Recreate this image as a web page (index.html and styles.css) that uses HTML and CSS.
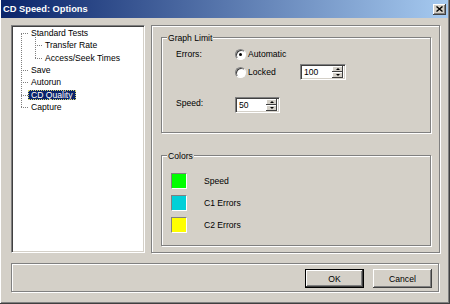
FILE: index.html
```html
<!DOCTYPE html>
<html lang="en">
<head>
    <meta charset="UTF-8">
    <title>CD Speed: Options</title>
    <link rel="stylesheet" href="styles.css">
</head>
<body>

    <div class="window">
        <div class="titlebar">
            <span class="title">CD Speed: Options</span>
            <span class="close-btn">
                <svg width="7" height="6" viewBox="0 0 7 6"><path d="M0.5 0.5 L6.5 5.5 M6.5 0.5 L0.5 5.5" stroke="#000" stroke-width="1.4"/></svg>
            </span>
        </div>

        <div class="main">
            <!-- Page tree -->
            <div class="tree">
                <ul class="tree-root">
                    <li>
                        <span class="node">Standard Tests</span>
                        <ul class="tree-sub">
                            <li><span class="node">Transfer Rate</span></li>
                            <li><span class="node">Access/Seek Times</span></li>
                        </ul>
                    </li>
                    <li><span class="node">Save</span></li>
                    <li><span class="node">Autorun</span></li>
                    <li><span class="node selected">CD Quality</span></li>
                    <li><span class="node">Capture</span></li>
                </ul>
            </div>

            <!-- CD Quality page -->
            <div class="panel">
                <div class="group graph-limit">
                    <span class="group-title">Graph Limit</span>
                    <div class="limit-grid">
                        <span class="field-label">Errors:</span>
                        <span class="radio-row"><span class="radio checked"></span>Automatic</span>
                        <span></span>

                        <span></span>
                        <span class="radio-row"><span class="radio"></span>Locked</span>
                        <span class="spin">
                            <span class="spin-value">100</span>
                            <span class="spin-btns">
                                <span class="spin-btn"><span class="arrow up"></span></span>
                                <span class="spin-btn"><span class="arrow down"></span></span>
                            </span>
                        </span>

                        <span class="field-label speed-label">Speed:</span>
                        <span class="spin spin-small">
                            <span class="spin-value">50</span>
                            <span class="spin-btns">
                                <span class="spin-btn"><span class="arrow up"></span></span>
                                <span class="spin-btn"><span class="arrow down"></span></span>
                            </span>
                        </span>
                    </div>
                </div>

                <div class="group colors">
                    <span class="group-title">Colors</span>
                    <div class="color-row"><span class="swatch speed"></span>Speed</div>
                    <div class="color-row"><span class="swatch c1"></span>C1 Errors</div>
                    <div class="color-row"><span class="swatch c2"></span>C2 Errors</div>
                </div>
            </div>
        </div>

        <div class="button-bar">
            <button class="btn default">OK</button>
            <button class="btn">Cancel</button>
        </div>
    </div>

</body>
</html>
```

FILE: styles.css
```css
body {
    margin: 0;
    font-family: "Liberation Sans", Arial, sans-serif;
    font-size: 8.6px;
    color: #000;
}
.window {
    width: 450px;
    height: 304px;
    box-sizing: border-box;
    background-color: #d4d0c8;
    border-right: 1px solid #404040;
    border-bottom: 1px solid #404040;
    padding: 0 1px 1px 1px;
    box-shadow: inset 1px 0 #fff, inset -1px -1px #808080;
}
.titlebar {
    height: 18px;
    display: flex;
    align-items: center;
    justify-content: space-between;
    padding: 0 2px;
    background: linear-gradient(to right, #0a246a, #a6caf0);
}
.title {
    color: white;
    font-weight: bold;
    font-size: 9.3px;
}
.close-btn {
    width: 13px;
    height: 11px;
    display: flex;
    align-items: center;
    justify-content: center;
    background-color: #d4d0c8;
    box-shadow: inset -1px -1px #404040, inset 1px 1px #fff, inset -2px -2px #808080;
}
.main {
    display: flex;
    gap: 6px;
    padding: 7px 8px 0 10px;
}
.tree {
    width: 134px;
    height: 228px;
    box-sizing: border-box;
    background-color: white;
    border: 1px solid;
    border-color: #808080 #fff #fff #808080;
    box-shadow: inset 1px 1px #404040, inset -1px -1px #d4d0c8;
    overflow: hidden;
}
.tree ul {
    list-style: none;
    margin: 0;
    padding: 0;
    position: relative;
}
.tree li {
    position: relative;
    line-height: 12.33px;
    white-space: nowrap;
}
.tree-root {
    margin-top: 1px !important;
}
.tree-root::before {
    content: "";
    position: absolute;
    left: 9px;
    top: 6px;
    bottom: 6px;
    border-left: 1px dotted #808080;
}
.tree-root > li {
    padding-left: 19px;
}
.tree-root > li::before {
    content: "";
    position: absolute;
    left: 9px;
    top: 6px;
    width: 7px;
    border-top: 1px dotted #808080;
}
.tree-sub::before {
    content: "";
    position: absolute;
    left: 4px;
    top: -5px;
    bottom: 6px;
    border-left: 1px dotted #808080;
}
.tree-sub > li {
    padding-left: 14px;
}
.tree-sub > li::before {
    content: "";
    position: absolute;
    left: 4px;
    top: 6px;
    width: 7px;
    border-top: 1px dotted #808080;
}
.node.selected {
    background-color: #0a246a;
    color: white;
    margin-left: -3px;
    padding: 0 3px;
    outline: 1px dotted #d8d870;
    outline-offset: -1px;
}
.panel {
    flex: 1;
    height: 228px;
    box-sizing: border-box;
    border: 1px solid #808080;
    box-shadow: inset 1px 1px #fff, 1px 1px #fff;
    padding: 11px 8px 0 9px;
}
.group {
    position: relative;
    box-sizing: border-box;
    border: 1px solid #808080;
    box-shadow: inset 1px 1px #fff, 1px 1px #fff;
}
.group-title {
    position: absolute;
    top: -5px;
    left: 5px;
    padding: 0 1px;
    line-height: 10px;
    background-color: #d4d0c8;
}
.graph-limit {
    height: 96px;
    padding: 7px 0 0 14px;
}
.limit-grid {
    display: grid;
    grid-template-columns: 59px 65px 46px;
    grid-template-rows: 18px 18px 32px;
    align-items: center;
}
.speed-label {
    align-self: end;
    margin-bottom: 5px;
}
.spin-small {
    align-self: end;
    width: 45px !important;
}
.radio-row {
    display: flex;
    align-items: center;
    gap: 2px;
}
.radio {
    width: 11px;
    height: 11px;
    box-sizing: border-box;
    border-radius: 50%;
    background-color: white;
    border: 1px solid;
    border-color: #808080 #fff #fff #808080;
    box-shadow: inset 1px 1px #404040;
    display: flex;
    align-items: center;
    justify-content: center;
}
.radio.checked::after {
    content: "";
    width: 3px;
    height: 3px;
    border-radius: 50%;
    background-color: #000;
}
.spin {
    width: 46px;
    height: 16px;
    box-sizing: border-box;
    display: flex;
    align-items: center;
    justify-content: space-between;
    background-color: white;
    border: 1px solid;
    border-color: #808080 #fff #fff #808080;
    box-shadow: inset 1px 1px #404040, inset -1px -1px #d4d0c8;
    padding: 1px 2px 1px 3px;
}
.spin-btns {
    display: flex;
    flex-direction: column;
    width: 11px;
    height: 12px;
}
.spin-btn {
    flex: 1;
    display: flex;
    align-items: center;
    justify-content: center;
    background-color: #d4d0c8;
    box-shadow: inset -1px -1px #404040, inset 1px 1px #fff;
}
.arrow {
    width: 0;
    height: 0;
    border-left: 2px solid transparent;
    border-right: 2px solid transparent;
}
.arrow.up {
    border-bottom: 2px solid #000;
}
.arrow.down {
    border-top: 2px solid #000;
}
.colors {
    margin-top: 22px;
    height: 91px;
    padding: 17px 0 0 9px;
    display: flex;
    flex-direction: column;
    gap: 6px;
}
.color-row {
    display: flex;
    align-items: center;
    gap: 17px;
}
.swatch {
    width: 16px;
    height: 16px;
    box-sizing: border-box;
    border: 1px solid;
    border-color: #808080 #fff #fff #808080;
}
.swatch.speed {
    background-color: #00ff00;
}
.swatch.c1 {
    background-color: #00d0d8;
}
.swatch.c2 {
    background-color: #ffff00;
}
.button-bar {
    margin: 10px 9px 0 10px;
    height: 29px;
    box-sizing: border-box;
    border: 1px solid #808080;
    box-shadow: inset 1px 1px #fff, 1px 1px #fff;
    display: flex;
    justify-content: flex-end;
    gap: 9px;
    padding: 5px 6px 0 0;
}
.btn {
    width: 59px;
    height: 19px;
    padding: 0;
    font-family: inherit;
    font-size: 8.6px;
    color: #000;
    background-color: #d4d0c8;
    border: none;
    box-shadow: inset -1px -1px #404040, inset 1px 1px #fff, inset -2px -2px #808080;
}
.btn.default {
    border: 1px solid #000;
}
```
